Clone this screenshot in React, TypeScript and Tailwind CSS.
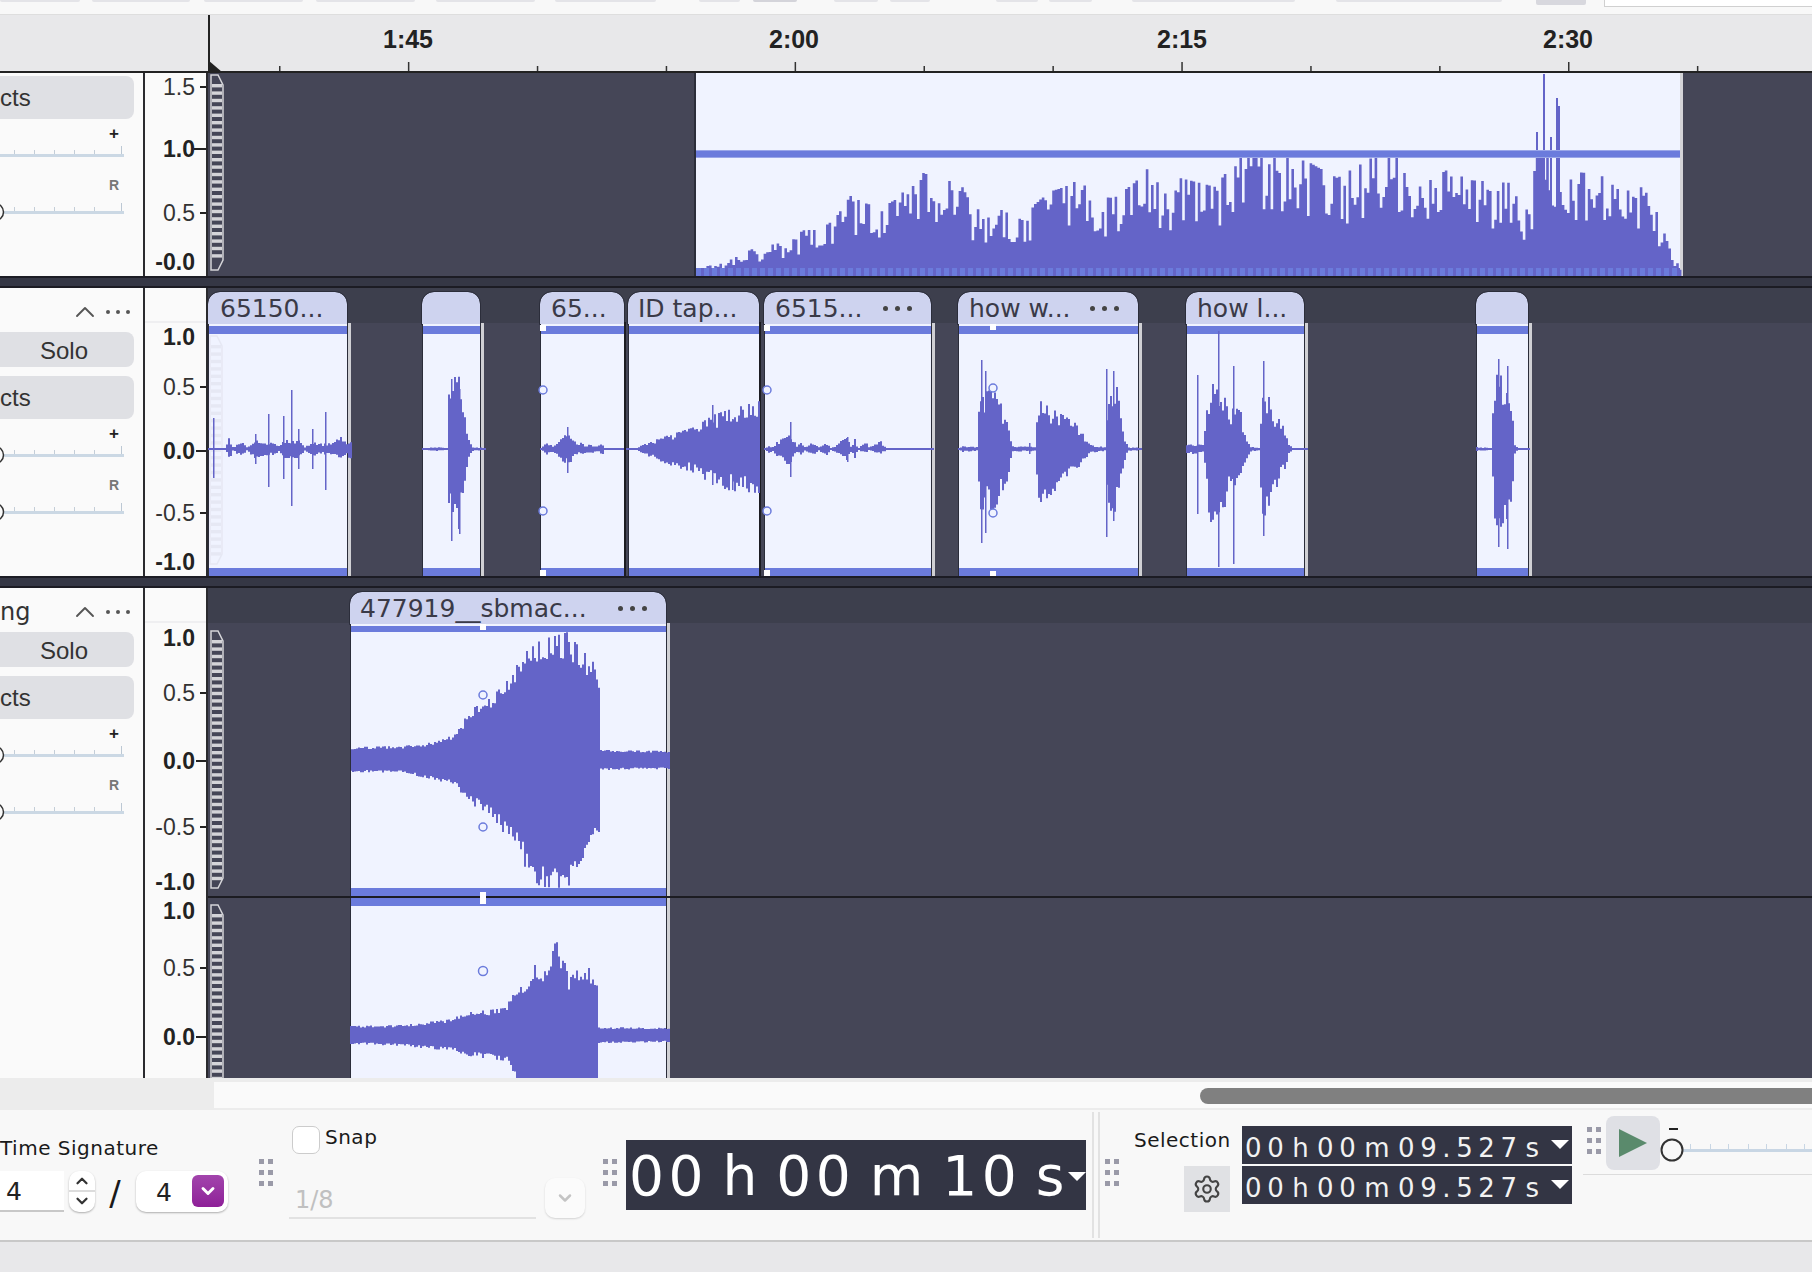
import { ChevronDown, ChevronUp, Settings } from "lucide-react";

type Pt = [number, number, number];
type Mark = { y: number; label?: string; bold?: boolean; tick: number };
type ClipData = { left: number; right: number; title?: string; dots?: boolean; edge?: "stripe" | "black"; pad?: number };

// small seeded random so the waveforms stay the same on every render
function makeRandom(seed: number) {
	let a = seed;
	return () => {
		a = (a + 0x6d2b79f5) | 0;
		let t = Math.imul(a ^ (a >>> 15), 1 | a);
		t = (t + Math.imul(t ^ (t >>> 7), 61 | t)) ^ t;
		return ((t ^ (t >>> 14)) >>> 0) / 4294967296;
	};
}

function wave(pts: Pt[], cy: number, seed: number, step = 1.5, floor = 0.6, minH = 1) {
	const rand = makeRandom(seed);
	let d = "";
	let i = 0;
	for (let x = pts[0][0]; x < pts[pts.length - 1][0]; x += step) {
		while (i < pts.length - 2 && x >= pts[i + 1][0]) i++;
		const [x0, u0, d0] = pts[i];
		const [x1, u1, d1] = pts[i + 1];
		const k = (x - x0) / (x1 - x0);
		const f1 = rand() < 0.28 ? 1 : floor + rand() * (0.95 - floor);
		const f2 = rand() < 0.28 ? 1 : floor + rand() * (0.95 - floor);
		const up = Math.max(minH, (u0 + (u1 - u0) * k) * f1);
		const down = (d0 + (d1 - d0) * k) * f2;
		const dn = d0 === 0 && d1 === 0 ? 0 : Math.max(minH, down);
		d += `M${x.toFixed(1)} ${(cy - up).toFixed(1)}H${(x + step).toFixed(1)}V${(cy + dn).toFixed(1)}H${x.toFixed(1)}Z`;
	}
	return d;
}

function spikes(items: Pt[], cy: number, width = 1.5) {
	return items.map(([x, u, d]) => `M${x} ${cy - u}H${x + width}V${cy + d}H${x}Z`).join("");
}

const track1Env: Pt[] = [
	[696, 8, 0], [723, 13, 0], [753, 28, 0], [780, 33, 0], [803, 46, 0], [817, 46, 0], [833, 56, 0], [850, 81, 0], [860, 74, 0],
	[880, 68, 0], [897, 78, 0], [918, 104, 0], [940, 98, 0], [960, 91, 0], [970, 72, 0], [988, 58, 0], [1000, 66, 0], [1023, 55, 0],
	[1033, 71, 0], [1048, 84, 0], [1063, 89, 0], [1077, 96, 0], [1097, 79, 0], [1113, 78, 0], [1133, 93, 0], [1148, 109, 0],
	[1163, 81, 0], [1175, 99, 0], [1214, 89, 0], [1236, 118, 0], [1245, 118, 0], [1273, 118, 0], [1295, 118, 0], [1309, 113, 0],
	[1336, 98, 0], [1370, 118, 0], [1384, 118, 0], [1400, 118, 0], [1418, 89, 0], [1457, 113, 0], [1468, 96, 0], [1511, 93, 0],
	[1529, 60, 0], [1532, 118, 0], [1560, 118, 0], [1562, 80, 0], [1573, 104, 0], [1598, 102, 0], [1620, 84, 0], [1641, 89, 0],
	[1652, 73, 0], [1661, 49, 0], [1670, 23, 0], [1680, 9, 0],
];
const track1Spikes: Pt[] = [[1536, 144, 0], [1543, 202, 0], [1550, 139, 0], [1556, 178, 0], [1558, 170, 0]];

const cy2 = 449;
const track2Env: Pt[][] = [
	[[208, 1, 1], [225, 1, 1], [228, 12, 12], [232, 2, 2], [240, 8, 8], [246, 2, 2], [254, 9, 9], [262, 7, 7], [272, 6, 6], [278, 3, 3], [283, 9, 9], [298, 9, 9], [304, 2, 2], [312, 7, 7], [322, 5, 5], [332, 7, 7], [340, 12, 12], [346, 7, 7], [352, 12, 12]],
	[[422, 1, 1], [436, 2, 2], [446, 1, 1], [448, 60, 65], [458, 80, 80], [463, 50, 50], [467, 15, 15], [471, 2, 2], [485, 1, 1]],
	[[540, 1, 1], [545, 6, 6], [552, 3, 3], [556, 5, 5], [561, 12, 12], [568, 16, 16], [572, 10, 10], [577, 4, 4], [581, 7, 7], [585, 3, 3], [590, 5, 5], [595, 2, 2], [603, 6, 6], [604, 1, 1], [624, 1, 1]],
	[[626, 1, 1], [636, 1, 1], [640, 4, 4], [668, 14, 16], [694, 22, 24], [712, 34, 36], [730, 40, 42], [759, 48, 44]],
	[[764, 1, 1], [768, 4, 4], [772, 2, 2], [776, 7, 7], [781, 10, 10], [786, 16, 16], [790, 14, 14], [796, 3, 3], [800, 6, 6], [804, 2, 2], [808, 5, 5], [813, 6, 6], [818, 2, 2], [826, 6, 6], [830, 1, 1], [836, 4, 4], [840, 8, 8], [846, 11, 11], [850, 3, 3], [854, 10, 10], [857, 1, 1], [866, 7, 5], [867, 1, 1], [879, 9, 5], [883, 4, 3], [886, 1, 1], [887, 6, 6], [888, 1, 1], [933, 1, 1]],
	[[958, 1, 1], [962, 3, 3], [976, 2, 2], [979, 55, 60], [992, 60, 62], [1002, 42, 46], [1008, 30, 30], [1011, 3, 3], [1034, 2, 2], [1037, 50, 55], [1048, 42, 48], [1062, 34, 34], [1076, 25, 25], [1089, 4, 4], [1104, 2, 2], [1107, 70, 72], [1116, 62, 60], [1123, 14, 14], [1127, 2, 2], [1141, 1, 1]],
	[[1186, 4, 4], [1192, 5, 5], [1203, 4, 4], [1205, 32, 36], [1210, 66, 82], [1222, 60, 68], [1228, 34, 38], [1236, 62, 42], [1243, 18, 18], [1249, 3, 3], [1259, 1, 1], [1261, 56, 76], [1266, 58, 60], [1272, 40, 50], [1278, 30, 32], [1284, 20, 20], [1288, 6, 6], [1292, 1, 1], [1308, 1, 1]],
	[[1476, 2, 2], [1491, 1, 1], [1493, 75, 75], [1506, 72, 80], [1511, 40, 46], [1514, 5, 5], [1517, 1, 1], [1530, 1, 1]],
];
const track2Spikes: Pt[] = [
	[213, 31, 29], [255, 15, 15], [268, 35, 38], [283, 33, 30], [291, 59, 57], [298, 20, 20], [312, 20, 20], [325, 37, 41], [451, 70, 92], [459, 60, 85], [567, 22, 24],
	[712, 44, 36], [732, 30, 41], [790, 27, 28], [847, 12, 13], [981, 89, 94], [985, 78, 84], [1029, 6, 5], [1106, 80, 88], [1113, 78, 72],
	[1197, 74, 65], [1218, 118, 118], [1233, 83, 115], [1263, 88, 87], [1498, 90, 98], [1507, 83, 100],
];

const ch1Env: Pt[] = [
	[350, 13, 12], [402, 14, 13], [435, 18, 20], [455, 26, 26], [469, 50, 44], [490, 62, 54], [504, 77, 75], [512, 85, 85], [518, 100, 90], [527, 110, 115], [540, 120, 127],
	[567, 128, 128], [574, 118, 110], [594, 96, 80], [598, 90, 82], [598.5, 10, 10], [670, 9, 9],
];
const ch2Env: Pt[] = [
	[350, 9, 9], [400, 10, 11], [453, 16, 16], [460, 22, 20], [505, 27, 26], [510, 38, 33], [520, 48, 60], [528, 58, 80], [533, 70, 90], [547, 68, 90], [553, 100, 90], [563, 76, 90],
	[568, 56, 90], [583, 72, 90], [597, 58, 90], [598, 8, 8], [670, 7, 7],
];

const clips2: ClipData[] = [
	{ left: 208, right: 347, title: "65150...", edge: "stripe", pad: 12 },
	{ left: 422, right: 480, edge: "stripe" },
	{ left: 540, right: 624, title: "65...", edge: "black", pad: 11 },
	{ left: 628, right: 759, title: "ID tap...", edge: "black", pad: 10 },
	{ left: 764, right: 931, title: "6515...", dots: true, edge: "stripe", pad: 11 },
	{ left: 958, right: 1138, title: "how w...", dots: true, edge: "stripe", pad: 11 },
	{ left: 1186, right: 1304, title: "how l...", edge: "stripe", pad: 11 },
	{ left: 1476, right: 1528, edge: "stripe" },
];

const marks1: Mark[] = [
	{ y: 87, label: "1.5", tick: 6 },
	{ y: 149, label: "1.0", bold: true, tick: 12 },
	{ y: 213, label: "0.5", tick: 6 },
	{ y: 262, label: "-0.0", bold: true, tick: 0 },
];
const marks2: Mark[] = [
	{ y: 337, label: "1.0", bold: true, tick: 0 },
	{ y: 387, label: "0.5", tick: 6 },
	{ y: 451, label: "0.0", bold: true, tick: 10 },
	{ y: 513, label: "-0.5", tick: 6 },
	{ y: 562, label: "-1.0", bold: true, tick: 0 },
];
const marks3: Mark[] = [
	{ y: 638, label: "1.0", bold: true, tick: 0 },
	{ y: 693, label: "0.5", tick: 6 },
	{ y: 761, label: "0.0", bold: true, tick: 10 },
	{ y: 827, label: "-0.5", tick: 6 },
	{ y: 882, label: "-1.0", bold: true, tick: 0 },
	{ y: 911, label: "1.0", bold: true, tick: 0 },
	{ y: 968, label: "0.5", tick: 6 },
	{ y: 1037, label: "0.0", bold: true, tick: 10 },
];

const topPills = [
	"w-[80px] bg-[#e4e4e8]",
	"ml-[12px] w-[98px] bg-[#e4e4e8]",
	"ml-[14px] w-[99px] bg-[#e4e4e8]",
	"ml-[13px] w-[99px] bg-[#e4e4e8]",
	"ml-[21px] w-[99px] bg-[#e4e4e8]",
	"ml-[20px] w-[101px] bg-[#e4e4e8]",
	"ml-[43px] w-[41px] bg-[#e4e4e8]",
	"ml-[13px] w-[44px] bg-[#d4d4da]",
	"ml-[37px] w-[44px] bg-[#e4e4e8]",
	"ml-[12px] w-[40px] bg-[#e4e4e8]",
	"ml-[66px] w-[42px] bg-[#e4e4e8]",
	"ml-[11px] w-[43px] bg-[#e4e4e8]",
	"ml-[40px] w-[163px] bg-[#e4e4e8]",
	"ml-[41px] w-[166px] bg-[#e4e4e8]",
	"ml-[34px] w-[50px] h-[5px] bg-[#d8d8de]",
];

const rulerLabels = [
	{ x: 408, text: "1:45" },
	{ x: 794, text: "2:00" },
	{ x: 1182, text: "2:15" },
	{ x: 1568, text: "2:30" },
];

function Ladder({ x, y0, y1, color, back }: { x: number; y0: number; y1: number; color: string; back: string }) {
	const rows: number[] = [];
	for (let y = y0 + 9; y < y1 - 9; y += 7.4) rows.push(y);
	return (
		<g>
			<path d={`M${x} ${y0}H${x + 7}L${x + 12} ${y0 + 10}V${y1 - 10}L${x + 7} ${y1}H${x}Z`} fill={back} stroke={color} strokeWidth="1.5" />
			{rows.map((y) => (
				<rect key={y} x={x + 1} y={y} width={10} height={3.4} fill={color} />
			))}
		</g>
	);
}

function Handle({ x, y, square }: { x: number; y: number; square?: boolean }) {
	if (square) return <rect x={x - 3} y={y - 3} width={6} height={6} fill="#ffffff" />;
	return <circle cx={x} cy={y} r={4} fill="#f0f3ff" stroke="#6b7bdc" strokeWidth="1.5" />;
}

function Dots({ color = "#444444", small }: { color?: string; small?: boolean }) {
	const dot = small ? "size-[4px] rounded-full" : "size-[5px] rounded-full";
	return (
		<div className={small ? "flex gap-[6px]" : "flex gap-[7px]"}>
			<span className={dot} style={{ background: color }} />
			<span className={dot} style={{ background: color }} />
			<span className={dot} style={{ background: color }} />
		</div>
	);
}

function Clip({ clip }: { clip: ClipData }) {
	return (
		<div className="absolute top-[4px] bottom-0 flex flex-col" style={{ left: clip.left - 208, width: clip.right - clip.left }}>
			<div
				className="flex h-[32px] shrink-0 items-center justify-between rounded-t-[12px] bg-[#ced3ef] font-['DejaVu_Sans',sans-serif] text-[25px] leading-none text-[#3a3a48] outline outline-[#2b2d3a]"
				style={{ paddingLeft: clip.pad ?? 0, paddingRight: 19 }}
			>
				<span className="whitespace-nowrap">{clip.title}</span>
				{clip.dots && <Dots />}
			</div>
			<div className="flex flex-1 flex-col justify-between border-l border-[#2b2d3a] bg-[#f0f3ff]">
				<div className="mt-[2px] h-[8px] bg-[#6b7bdc]" />
				<div className="h-[8px] bg-[#6b7bdc]" />
			</div>
			{clip.edge === "stripe" && <div className="absolute -right-[4px] top-[31px] bottom-0 w-[4px] border-l border-[#2b2d3a] bg-[#d0d0d4]" />}
			{clip.edge === "black" && <div className="absolute -right-[2px] top-[30px] bottom-0 w-[2px] bg-[#1c1c22]" />}
		</div>
	);
}

function VRuler({ marks, top, header }: { marks: Mark[]; top: number; header?: boolean }) {
	return (
		<div className="relative w-[63px] shrink-0 border-r-2 border-[#2a2a2e] bg-[#fafafa] font-['Liberation_Sans',sans-serif] text-[#222222]">
			{header && <div className="h-[35px] border-b-2 border-[#efeff1]" />}
			{marks.map((m) => (
				<div key={m.y}>
					<span
						className={`absolute right-[11px] -translate-y-1/2 text-[23px] leading-none ${m.bold ? "font-bold" : "text-[#333333]"}`}
						style={{ top: m.y - top }}
					>
						{m.label}
					</span>
					{m.tick > 0 && <span className="absolute right-0 h-[2px] bg-[#222222]" style={{ top: m.y - top - 1, width: m.tick }} />}
				</div>
			))}
		</div>
	);
}

function PanelSlider({ handle }: { handle?: boolean }) {
	return (
		<svg width="124" height="24" viewBox="0 0 124 24" className="block overflow-hidden">
			<rect x="0" y="14" width="124" height="3" fill="#cbd8e4" />
			{[14, 34, 54, 74, 94].map((x) => (
				<rect key={x} x={x} y="10" width="1" height="4" fill="#c4ced8" />
			))}
			<rect x="121" y="6" width="1" height="8" fill="#bcc8d4" />
			{handle && <circle cx="-5" cy="15" r="8.5" fill="#fafafa" stroke="#333333" strokeWidth="1.5" />}
		</svg>
	);
}

function PanelSliders({ firstHandle = true }: { firstHandle?: boolean }) {
	return (
		<div className="flex flex-col">
			<div className="flex h-[12px] w-[124px] items-center justify-end pr-[5px] font-['Liberation_Sans',sans-serif] text-[17px] font-bold leading-none text-[#222222]">+</div>
			<div className="mt-[1px]">
				<PanelSlider handle={firstHandle} />
			</div>
			<div className="mt-[15px] flex h-[12px] w-[124px] items-center justify-end pr-[5px] font-['Liberation_Sans',sans-serif] text-[14px] font-bold leading-none text-[#777777]">R</div>
			<div className="mt-[6px]">
				<PanelSlider handle />
			</div>
		</div>
	);
}

function PanelButton({ children, tall, center }: { children: string; tall?: boolean; center?: boolean }) {
	return (
		<div
			className={`flex w-[134px] items-center rounded-r-[8px] bg-[#dfe0e4] font-['Liberation_Sans',sans-serif] text-[24px] leading-none text-[#333333] ${tall ? "h-[43px]" : "h-[35px] pt-[3px]"} ${center ? "justify-center pr-[6px]" : ""}`}
		>
			{children}
		</div>
	);
}

function AudioPanel({ name }: { name?: string }) {
	return (
		<div className="flex w-[145px] shrink-0 flex-col overflow-hidden border-r-2 border-[#2a2a2e] bg-[#fafafa]">
			<div className="flex h-[44px] w-[134px] items-center pr-[4px] pt-[3px]">
				<span className="font-['DejaVu_Sans',sans-serif] text-[24px] leading-none text-[#333333]">{name}</span>
				<ChevronUp className="ml-auto mr-[5px]" size={32} strokeWidth={1.4} color="#555555" />
				<Dots color="#555555" small />
			</div>
			<PanelButton center>Solo</PanelButton>
			<div className="mt-[9px]">
				<PanelButton tall>cts</PanelButton>
			</div>
			<div className="mt-[8px]">
				<PanelSliders />
			</div>
		</div>
	);
}

function Separator() {
	return <div className="h-[12px] shrink-0 border-y-2 border-[#1c1c24] bg-[#353745]" />;
}

function Grip({ className }: { className: string }) {
	return (
		<div className={`grid w-[14px] shrink-0 grid-cols-2 gap-x-[4px] gap-y-[6px] self-start ${className}`}>
			{[0, 1, 2, 3, 4, 5].map((i) => (
				<span key={i} className="h-[5px] w-[5px] bg-[#9a9aa8]" />
			))}
		</div>
	);
}

function Arrow({ className }: { className: string }) {
	return <span className={`absolute h-0 w-0 border-x-[9px] border-t-[9px] border-x-transparent border-t-white ${className}`} />;
}

function SelectionTime() {
	return (
		<div className="relative h-[38px] overflow-hidden bg-[#333544] pl-[3px] font-['DejaVu_Sans',sans-serif] text-[26px] leading-[44px] tracking-[5.6px] [word-spacing:-11px] whitespace-pre text-[#f2f2f2]">
			00 h 00 m 09.527 s
			<Arrow className="right-[3px] top-[14px]" />
		</div>
	);
}

export default function App() {
	const rulerTicks: number[] = [];
	for (let k = 0; k < 13; k++) rulerTicks.push(279 + k * 128.9);

	return (
		<div className="flex h-[1272px] w-[1812px] flex-col overflow-hidden bg-[#f8f8f8]">
			{/* top toolbar edge */}
			<div className="flex h-[15px] shrink-0 items-start border-b border-[#dedede]">
				{topPills.map((c) => (
					<span key={c} className={`h-[2px] rounded-b-[2px] ${c}`} />
				))}
				<span className="ml-[18px] h-[7px] flex-1 border-b border-l border-[#d0d0d0] bg-white" />
			</div>

			{/* time ruler */}
			<div className="relative h-[58px] shrink-0 border-b-2 border-[#222222] bg-[#e8e8ea]">
				<svg width="1812" height="56" viewBox="0 15 1812 56" className="absolute inset-0">
					{rulerTicks.map((x, k) => (
						<rect key={x} x={x} y={k % 3 === 1 ? 62 : 66} width="1.5" height={k % 3 === 1 ? 10 : 6} fill="#333333" />
					))}
					<rect x="208" y="15" width="2" height="57" fill="#222222" />
					<path d="M208 60L222 72H208Z" fill="#222222" />
				</svg>
				{rulerLabels.map((l) => (
					<span
						key={l.text}
						className="absolute top-[11px] -translate-x-1/2 font-['Liberation_Sans',sans-serif] text-[25px] leading-[26px] font-bold text-[#222222]"
						style={{ left: l.x }}
					>
						{l.text}
					</span>
				))}
			</div>

			{/* track 1 */}
			<div className="flex h-[203px] shrink-0">
				<div className="flex w-[145px] shrink-0 flex-col overflow-hidden border-r-2 border-[#2a2a2e] bg-[#fafafa] pt-[3px]">
					<PanelButton tall>cts</PanelButton>
					<div className="mt-[8px]">
						<PanelSliders firstHandle={false} />
					</div>
				</div>
				<VRuler marks={marks1} top={73} />
				<div className="relative flex-1 overflow-hidden bg-[#454657]">
					<div className="absolute inset-y-0 left-[486px] w-[986px] border-l-2 border-[#2b2d3a] bg-[#f0f3ff]">
						<div className="absolute -right-[3px] inset-y-0 w-[3px] bg-[#d4d4d8]" />
					</div>
					<svg width="1604" height="203" viewBox="208 73 1604 203" className="absolute inset-0">
						<path d={wave(track1Env, 276, 11, 2.6, 0.5)} fill="#6464c8" />
						<path d={spikes(track1Spikes, 276, 2)} fill="#6464c8" />
						<Ladder x={211} y0={75} y1={270} color="#d4d4d8" back="#454657" />
					</svg>
					<div className="absolute left-[488px] top-[77px] h-[8px] w-[984px] border-y border-[#9aa6e8] bg-[#6b7bdc]" />
					<div className="absolute bottom-0 left-[488px] h-[8px] w-[984px] bg-[repeating-linear-gradient(to_right,#6b7bdc_0,#6b7bdc_5px,#6464c8_5px,#6464c8_8px)]" />
				</div>
			</div>

			<Separator />

			{/* track 2 */}
			<div className="flex h-[288px] shrink-0">
				<AudioPanel />
				<VRuler marks={marks2} top={288} header />
				<div className="relative flex-1 overflow-hidden bg-[#454657]">
					<div className="h-[35px] bg-[#3d3f4d]" />
					{clips2.map((c) => (
						<Clip key={c.left} clip={c} />
					))}
					<svg width="1604" height="288" viewBox="208 288 1604 288" className="absolute inset-0">
						<Ladder x={210} y0={336} y1={564} color="#e6e8f4" back="#f0f3ff" />
						{track2Env.map((env, i) => (
							<path key={i} d={wave(env, cy2, 30 + i, 2, 0.6)} fill="#6464c8" />
						))}
						<path d={spikes(track2Spikes, cy2)} fill="#6464c8" />
						{[543, 767].map((x) => (
							<g key={x}>
								<Handle x={x} y={328} square />
								<Handle x={x} y={390} />
								<Handle x={x} y={511} />
								<Handle x={x} y={573} square />
							</g>
						))}
						<Handle x={993} y={327} square />
						<Handle x={993} y={388} />
						<Handle x={993} y={513} />
						<Handle x={993} y={574} square />
					</svg>
				</div>
			</div>

			<Separator />

			{/* track 3, stereo */}
			<div className="flex h-[490px] shrink-0">
				<AudioPanel name="ng" />
				<VRuler marks={marks3} top={588} header />
				<div className="relative flex-1 overflow-hidden bg-[#454657]">
					<div className="h-[35px] bg-[#3d3f4d]" />
					<Clip clip={{ left: 350, right: 666, title: "477919__sbmac...", dots: true, edge: "stripe", pad: 10 }} />
					<svg width="1604" height="490" viewBox="208 588 1604 490" className="absolute inset-0">
						<Ladder x={211} y0={631} y1={888} color="#d4d4d8" back="#454657" />
						<Ladder x={211} y0={905} y1={1130} color="#d4d4d8" back="#454657" />
						<rect x="351" y="632" width="315" height="256" fill="#f0f3ff" />
						<rect x="351" y="888" width="315" height="8" fill="#6b7bdc" />
						<rect x="351" y="898" width="315" height="8" fill="#6b7bdc" />
						<rect x="351" y="906" width="315" height="172" fill="#f0f3ff" />
						<clipPath id="ch1">
							<rect x="351" y="632" width="330" height="256" />
						</clipPath>
						<g clipPath="url(#ch1)">
							<path d={wave(ch1Env, 760, 71, 2, 0.8)} fill="#6464c8" />
						</g>
						<path d={wave(ch2Env, 1035, 72, 2, 0.78)} fill="#6464c8" />
						<rect x="207" y="896" width="1605" height="2" fill="#1c1c22" />
						<Handle x={483} y={627} square />
						<Handle x={483} y={695} />
						<Handle x={483} y={827} />
						<rect x="480" y="892" width="6" height="12" fill="#ffffff" />
						<circle cx="483" cy="971" r="4.5" fill="#f0f3ff" stroke="#6b7bdc" strokeWidth="1.5" />
					</svg>
				</div>
			</div>

			{/* horizontal scrollbar */}
			<div className="flex h-[30px] shrink-0 bg-[#ececec]">
				<div className="w-[214px]" />
				<div className="mt-[4px] flex-1 bg-[#fafafa] pl-[986px] pt-[6px]">
					<div className="h-[16px] rounded-l-full bg-[#808080]" />
				</div>
			</div>

			{/* bottom toolbar */}
			<div className="relative flex h-[134px] shrink-0 border-y-2 border-t-[#ececec] border-b-[#c8c8c8] bg-[#f8f8f8] font-['DejaVu_Sans',sans-serif] text-[#1a1a1a]">
				<div className="w-[259px] shrink-0 pt-[27px]">
					<div className="text-[20px] leading-[22px] tracking-[0.5px]">Time Signature</div>
					<div className="mt-[11px] flex h-[42px] items-center">
						<div className="flex h-[41px] w-[64px] items-center border-b-2 border-[#c8c8c8] bg-white pl-[6px] pt-[4px] text-[25px] text-[#222222]">4</div>
						<div className="ml-[5px] flex h-[41px] w-[26px] flex-col items-center rounded-[10px] bg-white shadow-[0_1px_2px_rgba(0,0,0,0.3)]">
							<ChevronUp size={18} strokeWidth={3} color="#333333" className="mt-[1px]" />
							<div className="h-[2px] w-full bg-[#dcdcdc]" />
							<ChevronDown size={18} strokeWidth={3} color="#333333" />
						</div>
						<span className="ml-[11px] w-[18px] pt-[3px] text-center text-[34px] leading-none">/</span>
						<div className="ml-[12px] flex h-[41px] w-[92px] items-center rounded-[10px] bg-white pl-[20px] shadow-[0_1px_2px_rgba(0,0,0,0.3)]">
							<span className="w-[16px] pt-[3px] text-[25px] text-[#222222]">4</span>
							<div className="ml-[20px] flex size-[32px] items-center justify-center rounded-[6px] bg-gradient-to-b from-[#a244ac] to-[#8e1f98]">
								<ChevronDown size={20} strokeWidth={3.5} color="#ffffff" />
							</div>
						</div>
					</div>
				</div>

				<Grip className="mt-[49px]" />

				<div className="ml-[16px] w-[296px] shrink-0 pt-[16px]">
					<div className="flex items-start">
						<div className="ml-[3px] size-[28px] rounded-[7px] border border-[#cccccc] bg-white" />
						<span className="ml-[5px] text-[20px] leading-[22px] tracking-[0.5px]">Snap</span>
					</div>
					<div className="mt-[24px] flex items-start">
						<div className="flex h-[41px] w-[247px] items-center border-b-2 border-[#e2e2e2] pl-[6px] pt-[5px] text-[24px] text-[#c0c0c0]">1/8</div>
						<div className="ml-[9px] flex size-[40px] items-center justify-center rounded-[10px] bg-[#fbfbfb] shadow-[0_1px_2px_rgba(0,0,0,0.15)]">
							<ChevronDown size={20} strokeWidth={3} color="#c4c4c4" />
						</div>
					</div>
				</div>

				<Grip className="ml-[18px] mt-[49px]" />

				<div className="relative ml-[9px] mt-[30px] h-[70px] w-[460px] shrink-0 overflow-hidden bg-[#333544] pl-[3px] text-[55px] leading-[72px] tracking-[4.5px] [word-spacing:-7.5px] whitespace-pre text-white">
					00 h 00 m 10 s
					<Arrow className="right-0 top-[32px]" />
				</div>

				<div className="ml-[6px] mt-[2px] h-[126px] w-[8px] shrink-0 border-x-2 border-[#e2e2e2]" />

				<Grip className="ml-[5px] mt-[49px]" />

				<div className="ml-[15px] flex w-[96px] shrink-0 flex-col pt-[19px]">
					<span className="text-[20px] leading-[22px] tracking-[0.5px] whitespace-nowrap">Selection</span>
					<div className="ml-[50px] mt-[15px] flex h-[46px] w-[46px] items-center justify-center bg-[#e0e1e4]">
						<Settings size={30} strokeWidth={1.7} color="#444444" />
					</div>
				</div>

				<div className="ml-[12px] mt-[16px] flex w-[330px] shrink-0 flex-col gap-[2px]">
					<SelectionTime />
					<SelectionTime />
				</div>

				<Grip className="ml-[15px] mt-[17px]" />

				<div className="ml-[5px] mt-[6px] flex size-[54px] shrink-0 items-center justify-center self-start rounded-[8px] bg-[#dfe0e5]">
					<svg width="30" height="30" viewBox="0 0 30 30">
						<path d="M1 1L29 15L1 29Z" fill="#5a8a6c" />
					</svg>
				</div>

				<svg width="152" height="64" viewBox="0 0 152 64" className="shrink-0">
					<rect x="9" y="18" width="9" height="2" fill="#222222" />
					<rect x="12" y="39" width="140" height="3" fill="#c8d6e4" />
					{[30, 50, 68, 88, 106, 126, 144].map((x) => (
						<rect key={x} x={x} y="34" width="1" height="5" fill="#c8d6e4" />
					))}
					<circle cx="12" cy="40" r="10.5" fill="#f8f8f8" stroke="#333333" strokeWidth="2" />
				</svg>

				<div className="absolute left-[1583px] right-0 top-[64px] h-[1px] bg-[#dcdcdc]" />
			</div>

			<div className="flex-1 bg-[#e8e8ea]" />
		</div>
	);
}
